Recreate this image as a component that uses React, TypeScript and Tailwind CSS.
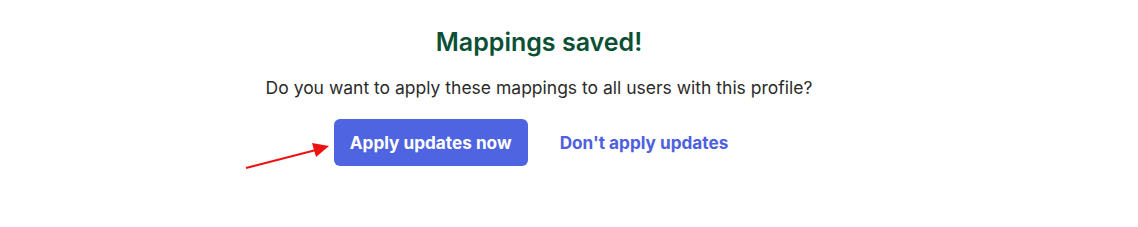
export default function App() {
  return (
    <div className="relative h-[227px] w-full bg-white font-['Inter',sans-serif]">
      <div className="flex flex-col items-center pr-[60px] pt-[25px]">
        <h1 className="text-[25px] font-semibold leading-[34px] text-[#0b5035]">
          Mappings saved!
        </h1>
        <p className="mt-[16px] text-[17.5px] leading-[26px] text-[#2b2b2b]">
          Do you want to apply these mappings to all users with this profile?
        </p>
        <div className="mt-[18px] flex items-center gap-4">
          <button className="h-[47px] w-[194px] rounded-[6px] bg-[#4e64e0] text-[17.2px] font-bold text-white">
            Apply updates now
          </button>
          <button className="px-4 text-[17.2px] font-bold text-[#4e60df]">
            Don&apos;t apply updates
          </button>
        </div>
      </div>
      {/* annotation arrow */}
      <svg
        className="absolute left-[240px] top-[138px]"
        width="96"
        height="36"
        viewBox="0 0 96 36"
      >
        <line x1="6" y1="30" x2="76" y2="12" stroke="#ee1111" strokeWidth="2" />
        <polygon points="89,8 72,5 76,19" fill="#ee1111" />
      </svg>
    </div>
  );
}
